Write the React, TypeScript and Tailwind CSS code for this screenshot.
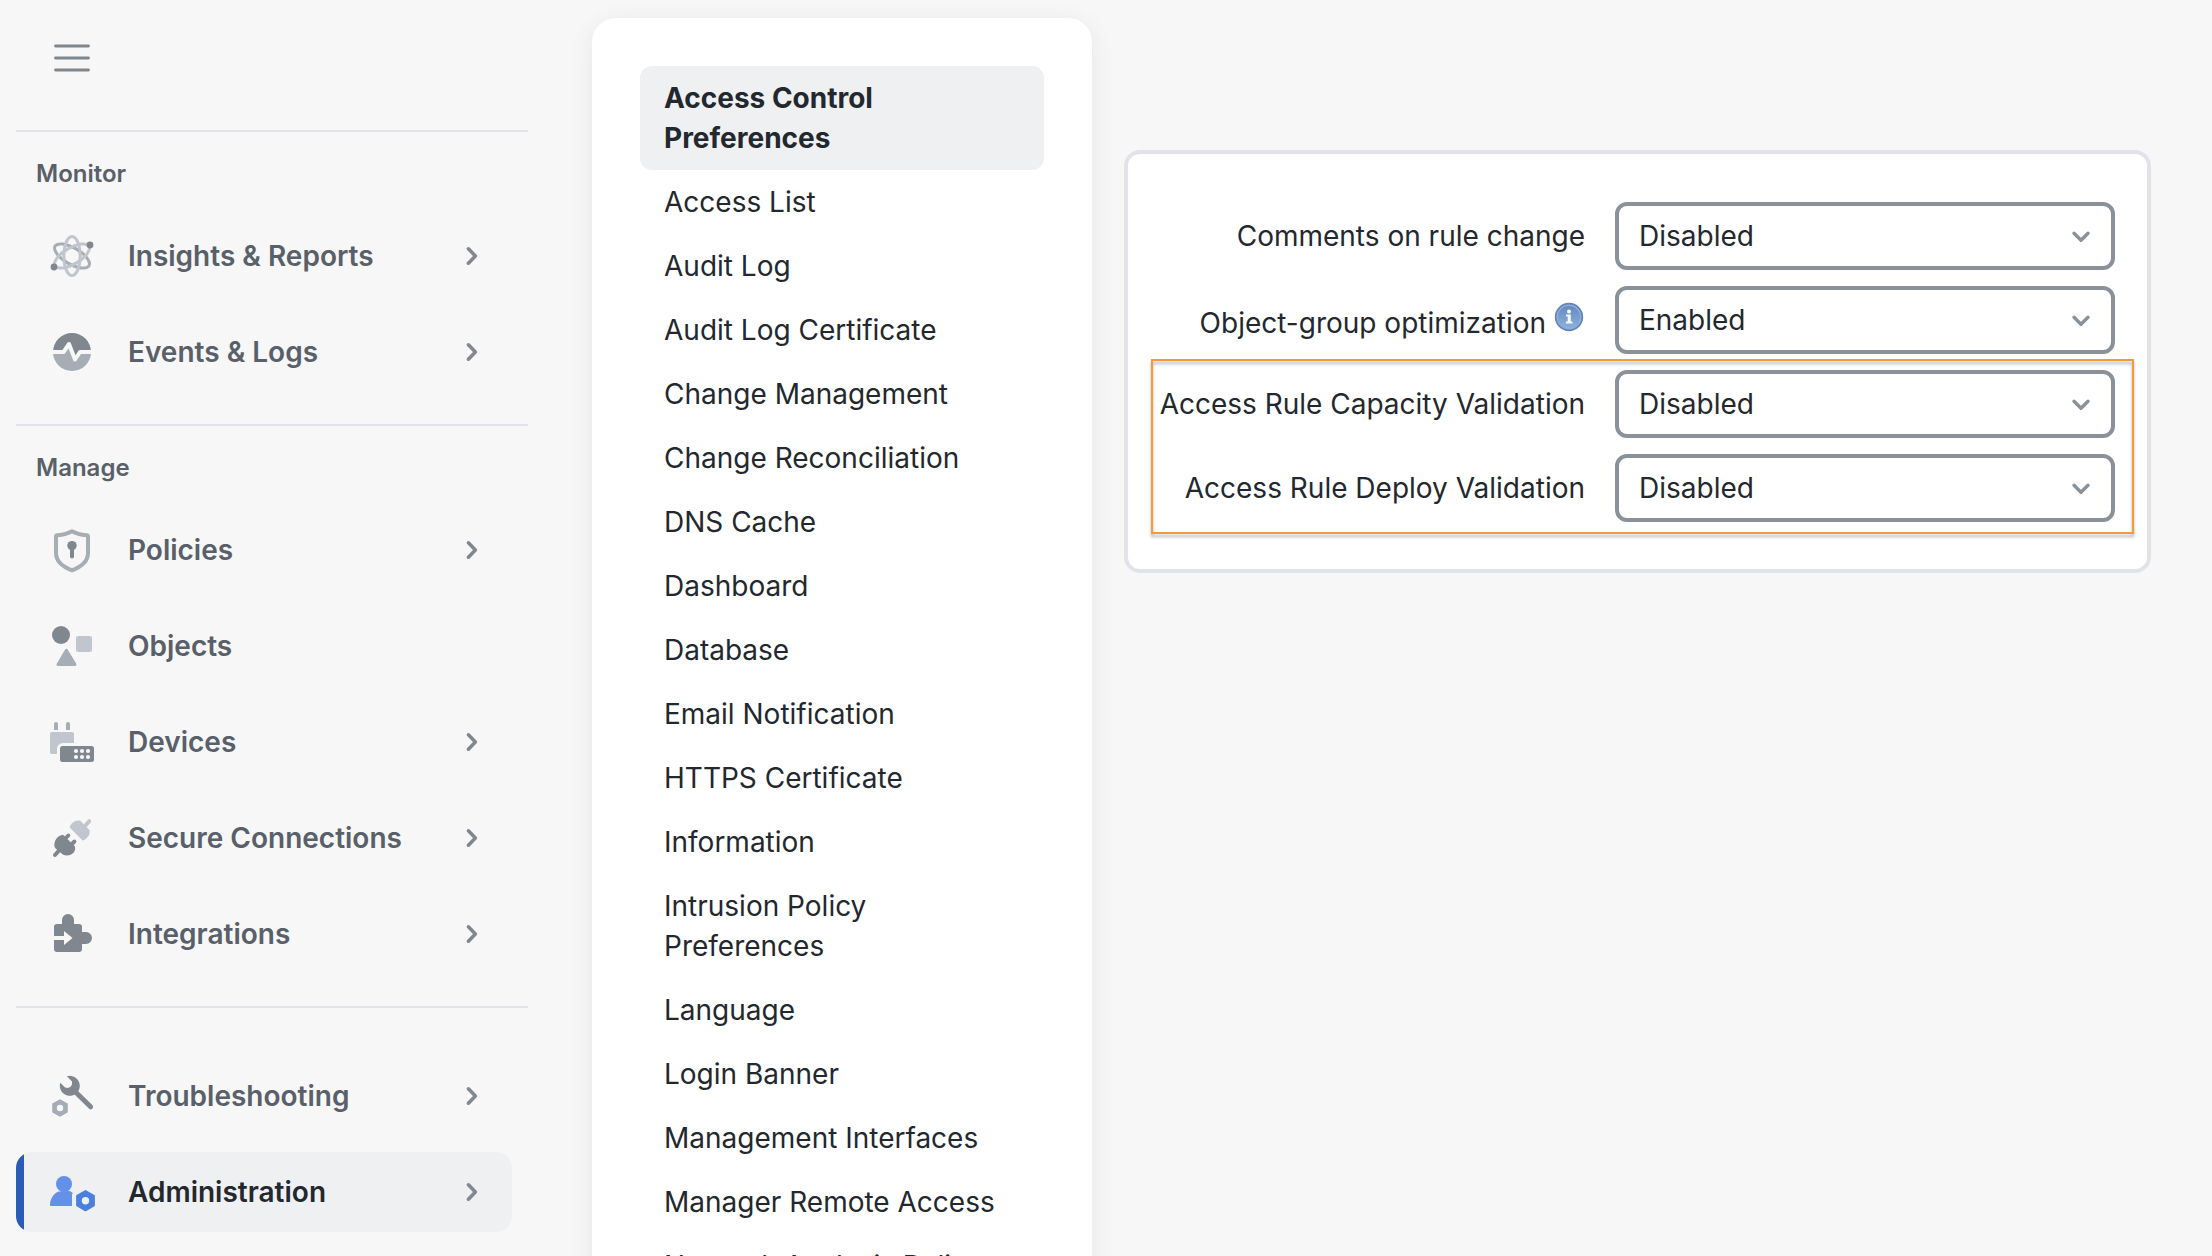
import type { ReactNode } from 'react';

interface NavEntry {
  label:    string;
  icon:     ReactNode;
  chevron?: boolean;
  active?:  boolean;
}

interface Preference {
  label: string;
  value: string;
  info?: boolean;
}

const InsightsIcon = () => (
  <svg className="w-12 h-12 shrink-0" viewBox="0 0 48 48" fill="none" strokeWidth={3}>
    <ellipse cx="24" cy="24" rx="8.2" ry="19.6" stroke="#a7adb4" transform="rotate(-60 24 24)" />
    <ellipse cx="24" cy="24" rx="8.2" ry="19.6" stroke="#c1c5cd" transform="rotate(60 24 24)" />
    <ellipse cx="24" cy="24" rx="8.2" ry="19.6" stroke="#c1c5cd" />
    <circle cx="42" cy="13" r="3.4" fill="#80878f" />
    <circle cx="6" cy="35" r="3.4" fill="#80878f" />
  </svg>
);

const EventsIcon = () => (
  <svg className="w-12 h-12 shrink-0" viewBox="0 0 48 48">
    <path d="M5 24a19 19 0 0 0 38 0Z" fill="#a7adb4" />
    <path d="M5 24a19 19 0 0 1 38 0H32l-5 7.5L24 24Z" fill="#80878f" />
    <path d="M16 24 21 16l3 8Z" fill="#a7adb4" />
    <path d="M3 24h12.5L21 16l6 15.5L32 24h13" fill="none" stroke="#f7f7f7" strokeWidth="4" strokeLinejoin="round" />
  </svg>
);

const PoliciesIcon = () => (
  <svg className="w-12 h-12 shrink-0" viewBox="0 0 48 48">
    <path d="M24 5.2C19.5 7.8 14 8.8 9.4 9.2 8.5 9.3 8 9.8 8 10.7V27c0 8 6 13.5 16 17.3C34 40.5 40 35 40 27V10.7c0-.9-.5-1.4-1.4-1.5C34 8.8 28.5 7.8 24 5.2Z" fill="none" stroke="#a7adb4" strokeWidth="4" strokeLinejoin="round" />
    <circle cx="24" cy="19.6" r="4.7" fill="#80878f" />
    <path d="M24 20v10.5" stroke="#80878f" strokeWidth="4" strokeLinecap="round" />
  </svg>
);

const ObjectsIcon = () => (
  <svg className="w-12 h-12 shrink-0" viewBox="0 0 48 48">
    <circle cx="13" cy="13" r="9" fill="#80878f" />
    <rect x="28" y="14" width="16" height="16" rx="2" fill="#c1c5cd" />
    <path d="M18.4 28.2 27 42.5H10Z" fill="#a7adb4" stroke="#a7adb4" strokeWidth="3" strokeLinejoin="round" />
  </svg>
);

const DevicesIcon = () => (
  <svg className="w-12 h-12 shrink-0" viewBox="0 0 48 48">
    <path d="M6 12V6a2 2 0 0 1 4 0v6ZM18 12V6a2 2 0 0 1 4 0v6Z" fill="#a7adb4" />
    <path d="M4 14h20a2 2 0 0 1 2 2v9H15a6 6 0 0 0-6 6v5H4a2 2 0 0 1-2-2V16a2 2 0 0 1 2-2Z" fill="#c1c5cd" />
    <rect x="12" y="28" width="34" height="16" rx="2.5" fill="#80878f" />
    <g fill="#f7f7f7">
      <circle cx="28" cy="33" r="2.1" />
      <circle cx="34" cy="33" r="2.1" />
      <circle cx="40" cy="33" r="2.1" />
      <circle cx="28" cy="39" r="2.1" />
      <circle cx="34" cy="39" r="2.1" />
      <circle cx="40" cy="39" r="2.1" />
    </g>
  </svg>
);

const ConnectionsIcon = () => (
  <svg className="w-12 h-12 shrink-0" viewBox="0 0 48 48" strokeLinecap="round" strokeWidth="4">
    <path d="M21.6 13.4 34.6 26.6C39 25 42.5 21 41.5 16L32 6.6C27 5.6 23 9 21.6 13.4Z" fill="#c1c5cd" />
    <path d="M37 12 41.2 7.2" stroke="#c1c5cd" />
    <path d="M15 20.8 27 32.5C28 38 24 41 19 41.5 15.5 41.5 14 40 11.5 37.5 8 35 6.3 34 6.3 30.5 7 25 10 21.5 15 20.8Z" fill="#80878f" />
    <path d="M11 36.5 7 41M17 25l3.3-3.5M23 31l3.4-3.5" stroke="#80878f" />
  </svg>
);

const IntegrationsIcon = () => (
  <svg className="w-12 h-12 shrink-0" viewBox="0 0 48 48" fill="#80878f">
    <path d="M14 10a6 6 0 0 1 12 0v4h5a3 3 0 0 1 3 3v5h4a6 6 0 0 1 0 12h-4v5a3 3 0 0 1-3 3H9a3 3 0 0 1-3-3v-9h10v5l8.5-7-8.5-7v5H6v-9a3 3 0 0 1 3-3h5Z" />
  </svg>
);

const TroubleshootingIcon = () => (
  <svg className="w-12 h-12 shrink-0" viewBox="0 0 48 48">
    <path d="M18.8 4.3A10 10 0 1 1 12.3 10.7L16.8 15.2C20 16.8 23 15.5 24 12.3V9.5Z" fill="#80878f" />
    <path d="M27 19.5 42.6 34.8" stroke="#80878f" strokeWidth="5" strokeLinecap="round" />
    <path d="m12 28.3 6.8 3.9v7.6L12 43.7l-6.8-3.9v-7.6Z" fill="#a7adb4" stroke="#a7adb4" strokeWidth="2" strokeLinejoin="round" />
    <circle cx="12" cy="36" r="3.2" fill="#f7f7f7" />
  </svg>
);

const AdministrationIcon = () => (
  <svg className="w-12 h-12 shrink-0" viewBox="0 0 48 48">
    <circle cx="16" cy="16" r="8" fill="#6390e8" />
    <path d="M10.5 23.5C5 26 2.2 31 2 36.5c0 1 .5 1.5 1.5 1.5H24V26.5l.8-1.5-3-2Z" fill="#6390e8" />
    <path d="m37.5 23.1 8.4 4.8v9.6l-8.4 4.8-8.4-4.8v-9.6Z" fill="#4c80dd" stroke="#4c80dd" strokeWidth="2" strokeLinejoin="round" />
    <circle cx="37.5" cy="32.7" r="3.7" fill="#eff0f2" />
  </svg>
);

const InfoIcon = () => (
  <svg className="w-[30px] h-[30px] shrink-0" viewBox="0 0 30 30">
    <defs>
      <linearGradient id="infoFill" x1="0" y1="0" x2="0" y2="1">
        <stop offset="0" stopColor="#6489bd" />
        <stop offset="1" stopColor="#8db0dc" />
      </linearGradient>
    </defs>
    <circle cx="15" cy="15" r="14.2" fill="#6286ba" />
    <circle cx="15" cy="15" r="11.8" fill="url(#infoFill)" stroke="#8fadd6" strokeWidth="1.4" />
    <circle cx="15" cy="9.4" r="2" fill="#f4f7fb" />
    <path d="M12 12.4h4.8v7h1.7v2.1h-6.6v-2.100h1.800v-4.900H12Z" fill="#f4f7fb" />
  </svg>
);

const MONITOR: NavEntry[] = [
  { label: 'Insights & Reports', icon: <InsightsIcon />, chevron: true },
  { label: 'Events & Logs',      icon: <EventsIcon />,   chevron: true },
];

const MANAGE: NavEntry[] = [
  { label: 'Policies',           icon: <PoliciesIcon />,     chevron: true },
  { label: 'Objects',            icon: <ObjectsIcon /> },
  { label: 'Devices',            icon: <DevicesIcon />,      chevron: true },
  { label: 'Secure Connections', icon: <ConnectionsIcon />,  chevron: true },
  { label: 'Integrations',       icon: <IntegrationsIcon />, chevron: true },
];

const SYSTEM: NavEntry[] = [
  { label: 'Troubleshooting', icon: <TroubleshootingIcon />, chevron: true },
  { label: 'Administration',  icon: <AdministrationIcon />,  chevron: true, active: true },
];

const SETTINGS = [
  'Access Control Preferences',
  'Access List',
  'Audit Log',
  'Audit Log Certificate',
  'Change Management',
  'Change Reconciliation',
  'DNS Cache',
  'Dashboard',
  'Database',
  'Email Notification',
  'HTTPS Certificate',
  'Information',
  'Intrusion Policy Preferences',
  'Language',
  'Login Banner',
  'Management Interfaces',
  'Manager Remote Access',
  'Network Analysis Policy Preferences',
];

const PREFERENCES: Preference[] = [
  { label: 'Comments on rule change',         value: 'Disabled' },
  { label: 'Object-group optimization',       value: 'Enabled', info: true },
  { label: 'Access Rule Capacity Validation', value: 'Disabled' },
  { label: 'Access Rule Deploy Validation',   value: 'Disabled' },
];

function NavGroup({ items }: { items: NavEntry[] }) {
  return (
    <ul className="flex flex-col gap-4">
      {items.map((item) => (
        <li
          key={item.label}
          className={`flex items-center h-20 w-[496px] pl-6 pr-[30px] rounded-2xl overflow-hidden relative text-[28px] font-semibold ${item.active ? 'bg-[#eff0f2] text-[#23282e]' : 'text-[#596069]'}`}
        >
          {item.active && <span className="absolute left-0 inset-y-0 w-2 bg-[#2a5bb8]" />}
          <span className="ml-2">{item.icon}</span>
          <span className="ml-8 flex-1 whitespace-nowrap">{item.label}</span>
          {item.chevron && (
            <svg className="w-5 h-6 shrink-0" viewBox="0 0 20 24" fill="none" stroke="#80878f" strokeWidth="3.5" strokeLinecap="round" strokeLinejoin="round">
              <path d="m6.4 4.800 7 7.200-7 7.200" />
            </svg>
          )}
        </li>
      ))}
    </ul>
  );
}

function SectionLabel({ children }: { children: ReactNode }) {
  return <h2 className="h-[84px] pl-5 leading-[84px] text-2xl font-semibold text-[#596069]">{children}</h2>;
}

function Sidebar() {
  return (
    <nav className="w-[512px] ml-4 shrink-0">
      <button aria-label="Toggle menu" className="flex items-center h-[130px] pl-9 pb-[14px]">
        <svg className="w-10 h-8" viewBox="0 0 40 32" stroke="#80878f" strokeWidth="2.8" strokeLinecap="round">
          <path d="M3.5 4h33M3.5 16h33M3.5 28h33" />
        </svg>
      </button>
      <div className="border-t-2 border-[#e2e3e9]">
        <SectionLabel>Monitor</SectionLabel>
        <NavGroup items={MONITOR} />
      </div>
      <div className="mt-8 border-t-2 border-[#e2e3e9]">
        <SectionLabel>Manage</SectionLabel>
        <NavGroup items={MANAGE} />
      </div>
      <div className="mt-8 pt-12 border-t-2 border-[#e2e3e9]">
        <NavGroup items={SYSTEM} />
      </div>
    </nav>
  );
}

function SettingsMenu() {
  return (
    <aside className="w-[500px] h-[1400px] mt-[18px] ml-16 pt-12 px-12 shrink-0 bg-white rounded-3xl shadow-[0_4px_24px_rgba(0,0,0,0.07)]">
      <ul>
        {SETTINGS.map((name, i) => (
          <li
            key={name}
            className={`w-[404px] py-3 px-6 rounded-xl text-[28px] leading-10 text-[#23282e] ${i === 0 ? 'bg-[#eff0f2] font-bold' : ''}`}
          >
            {name}
          </li>
        ))}
      </ul>
    </aside>
  );
}

function PreferenceRow({ label, value, info }: Preference) {
  return (
    <div className="flex items-center justify-end h-[68px] text-[28px] leading-10 text-[#23282e]">
      <span className={`whitespace-nowrap ${info ? 'pt-1.5' : ''}`}>{label}</span>
      {info && <span className="ml-2 mr-px mb-1.5"><InfoIcon /></span>}
      <div className="flex items-center justify-between w-[500px] h-[68px] ml-[30px] pl-5 pr-[18px] shrink-0 border-4 border-[#8a9199] rounded-xl">
        <span>{value}</span>
        <svg className="w-6 h-6" viewBox="0 0 24 24" fill="none" stroke="#8a9199" strokeWidth="3.4" strokeLinecap="round" strokeLinejoin="round">
          <path d="m5 9.2 7 7 7-7" />
        </svg>
      </div>
    </div>
  );
}

export default function App() {
  return (
    <div className="flex items-start w-[2212px] h-[1256px] overflow-hidden bg-[#f7f7f7] font-['Inter',sans-serif]">
      <Sidebar />
      <SettingsMenu />
      <main className="relative flex flex-col gap-4 w-[1027px] h-[423px] mt-[150px] ml-8 pt-12 pr-8 bg-white border-4 border-[#e2e3e8] rounded-2xl">
        {PREFERENCES.map((p) => <PreferenceRow key={p.label} {...p} />)}
        {/* highlight around the two validation settings */}
        <div className="absolute left-[23px] top-[205px] w-[983px] h-[175px] border-2 border-[#f29b38] drop-shadow-[0_3px_1.5px_rgba(0,0,0,0.3)]" />
      </main>
    </div>
  );
}
